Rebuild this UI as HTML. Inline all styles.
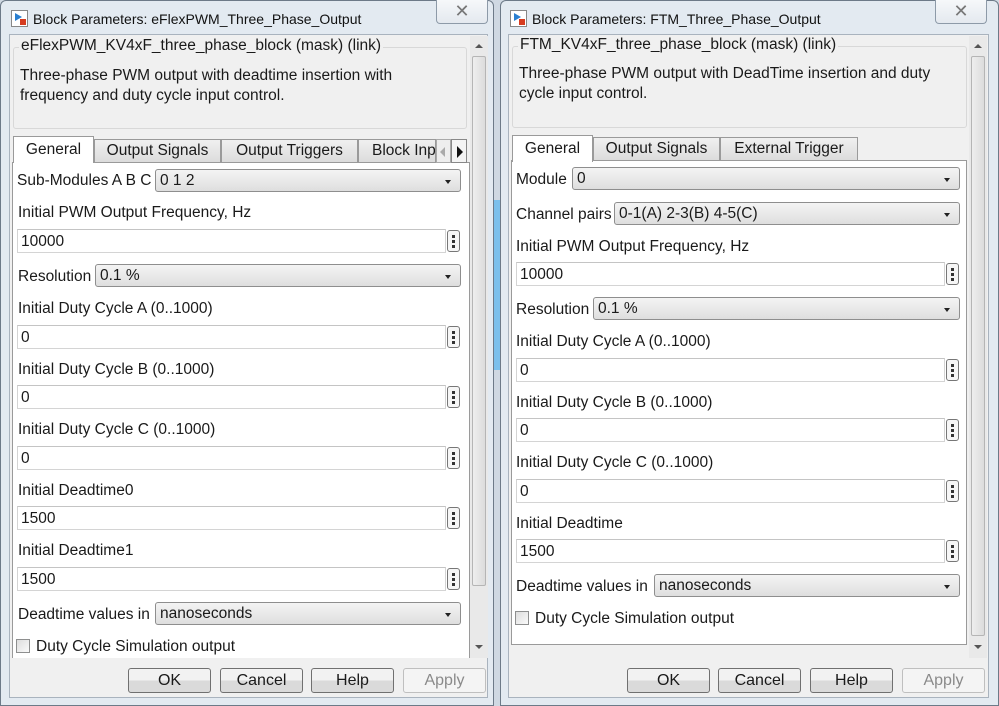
<!DOCTYPE html>
<html><head><meta charset="utf-8">
<style>
*{box-sizing:border-box;margin:0;padding:0}
body{width:999px;height:706px;overflow:hidden;background:#cfd8e2;font-family:"Liberation Sans",Tahoma,sans-serif;font-size:15.5px;color:#1a1a1a;position:relative}
.a{position:absolute;white-space:nowrap}
.lb{margin-top:1px}
.win{position:absolute;top:0;height:706px;background:#e3eaf1;border:1px solid #6d7a88;border-radius:6px 6px 0 0}
.body{position:absolute;background:#f0f0f0;border:1px solid #a9b3be}
.title{font-size:14px;color:#111}
.close{position:absolute;top:0;width:52px;height:24px;border:1px solid #8d9aa8;border-top:none;border-radius:0 0 4px 4px;background:linear-gradient(#f6f8fa,#e4e9ef);text-align:center;font-size:18px;color:#777;line-height:22px}
.icon{position:absolute;width:17px;height:17px;border:1px solid #888;background:#fff}
.icon:before{content:"";position:absolute;left:3px;top:2px;border-left:7px solid #2a7fd0;border-top:4px solid transparent;border-bottom:4px solid transparent}
.icon:after{content:"";position:absolute;left:8px;top:8px;width:6px;height:6px;background:#d63b1f}
.grp{position:absolute;border:1px solid #d8d8d8;border-radius:3px}
.tab{position:absolute;height:24px;border:1px solid #9a9a9a;background:linear-gradient(#f0f0f0,#dcdcdc);text-align:center;line-height:22px;white-space:nowrap}
.tab.sel{background:#fff;border-bottom:none;height:27px}
.panel{position:absolute;background:#fff;border:1px solid #9a9a9a}
.edit{position:absolute;height:24px;border:1px solid #d4d4d4;border-top-color:#c4c4c4;background:#fff;padding-left:3px;line-height:23px}
.dots{position:absolute;width:13px;height:22px;border:1px solid #777;border-radius:3px;background:#f6f6f6}
.dots:before{content:"";position:absolute;left:4px;top:4px;width:3px;height:3px;background:#333;box-shadow:0 5px 0 #333,0 10px 0 #333}
.combo{position:absolute;height:23px;border:1px solid #8e8e8e;border-radius:3px;background:linear-gradient(#f4f4f4,#dedede);padding-left:4px;line-height:22px}
.combo:after{content:"";position:absolute;right:9px;top:10px;border-top:4px solid #222;border-left:3.5px solid transparent;border-right:3.5px solid transparent}
.cb{position:absolute;width:14px;height:14px;border:1px solid #8e8f8f;background:linear-gradient(135deg,#ddd,#fafafa)}
.btn{position:absolute;height:25px;width:83px;border:1px solid #707070;border-radius:3px;background:linear-gradient(#f2f2f2 50%,#dadada 50%);text-align:center;line-height:24px;font-size:16px}
.btn.dis{border-color:#bfbfbf;color:#8a8a8a;background:#f4f4f4}
.sb{position:absolute;width:18px;background:#e9e9e9}
.thumb{position:absolute;left:2px;width:14px;border:1px solid #b5b5b5;border-radius:2px;background:linear-gradient(90deg,#eee,#dcdcdc)}
.up,.dn{position:absolute;left:5px;border-left:4px solid transparent;border-right:4px solid transparent}
.up{border-bottom:4px solid #555}
.dn{border-top:4px solid #555}
</style></head><body>
<div class="a" style="left:492px;top:200px;width:10px;height:170px;background:#7cc0ec"></div>

<!-- LEFT WINDOW -->
<div class="win" style="left:0;width:494px"></div>
<div class="icon" style="left:11px;top:10px"></div>
<div class="a title" style="left:33px;top:11px">Block Parameters: eFlexPWM_Three_Phase_Output</div>
<div class="close" style="left:436px">✕</div>
<div class="body" style="left:9px;top:34px;width:479px;height:664px"></div>
<div class="grp" style="left:13px;top:47px;width:454px;height:82px"></div>
<div class="a" style="left:19px;top:37px;background:#f0f0f0;padding:0 2px;font-size:15.5px">eFlexPWM_KV4xF_three_phase_block (mask) (link)</div>
<div class="a" style="left:20px;top:66px;line-height:20px">Three-phase PWM output with deadtime insertion with<br>frequency and duty cycle input control.</div>
<div class="panel" style="left:12px;top:162px;width:458px;height:496px;border-bottom:none"></div>
<div class="tab" style="left:94px;top:139px;width:127px">Output Signals</div>
<div class="tab" style="left:221px;top:139px;width:137px">Output Triggers</div>
<div class="tab" style="left:358px;top:139px;width:78px;text-align:left;padding-left:13px;overflow:hidden">Block Inp</div>
<div class="a" style="left:436px;top:139px;width:15px;height:24px;background:#eee;border:1px solid #aaa"><div style="position:absolute;left:3px;top:7px;border-right:5px solid #aaa;border-top:5px solid transparent;border-bottom:5px solid transparent"></div></div>
<div class="a" style="left:451px;top:139px;width:16px;height:24px;background:#f4f4f4;border:1px solid #888"><div style="position:absolute;left:5px;top:6px;border-left:6px solid #111;border-top:6px solid transparent;border-bottom:6px solid transparent"></div></div>
<div class="tab sel" style="left:13px;top:136px;width:81px;line-height:26px">General</div>
<div class="a lb" style="left:17px;top:171px">Sub-Modules A B C</div>
<div class="combo" style="left:155px;top:169px;width:306px">0 1 2</div>
<div class="a lb" style="left:18px;top:203px">Initial PWM Output Frequency, Hz</div>
<div class="edit" style="left:17px;top:229px;width:429px">10000</div><div class="dots" style="left:447px;top:230px"></div>
<div class="a lb" style="left:18px;top:267px">Resolution</div>
<div class="combo" style="left:95px;top:264px;width:366px">0.1 %</div>
<div class="a lb" style="left:18px;top:299px">Initial Duty Cycle A (0..1000)</div>
<div class="edit" style="left:17px;top:325px;width:429px">0</div><div class="dots" style="left:447px;top:326px"></div>
<div class="a lb" style="left:18px;top:360px">Initial Duty Cycle B (0..1000)</div>
<div class="edit" style="left:17px;top:385px;width:429px">0</div><div class="dots" style="left:447px;top:386px"></div>
<div class="a lb" style="left:18px;top:420px">Initial Duty Cycle C (0..1000)</div>
<div class="edit" style="left:17px;top:446px;width:429px">0</div><div class="dots" style="left:447px;top:447px"></div>
<div class="a lb" style="left:18px;top:481px">Initial Deadtime0</div>
<div class="edit" style="left:17px;top:506px;width:429px">1500</div><div class="dots" style="left:447px;top:507px"></div>
<div class="a lb" style="left:18px;top:541px">Initial Deadtime1</div>
<div class="edit" style="left:17px;top:567px;width:429px">1500</div><div class="dots" style="left:447px;top:568px"></div>
<div class="a lb" style="left:18px;top:605px">Deadtime values in</div>
<div class="combo" style="left:155px;top:602px;width:306px">nanoseconds</div>
<div class="cb" style="left:16px;top:639px"></div>
<div class="a lb" style="left:36px;top:637px">Duty Cycle Simulation output</div>
<div class="sb" style="left:470px;top:36px;height:622px"><div class="up" style="top:8px"></div><div class="thumb" style="top:20px;height:530px"></div><div class="dn" style="top:609px"></div></div>
<div class="btn" style="left:128px;top:668px">OK</div>
<div class="btn" style="left:220px;top:668px">Cancel</div>
<div class="btn" style="left:311px;top:668px">Help</div>
<div class="btn dis" style="left:403px;top:668px">Apply</div>

<!-- RIGHT WINDOW -->
<div class="win" style="left:500px;width:499px"></div>
<div class="icon" style="left:510px;top:10px"></div>
<div class="a title" style="left:532px;top:11px">Block Parameters: FTM_Three_Phase_Output</div>
<div class="close" style="left:935px">✕</div>
<div class="body" style="left:508px;top:34px;width:481px;height:664px"></div>
<div class="grp" style="left:512px;top:46px;width:455px;height:82px"></div>
<div class="a" style="left:518px;top:36px;background:#f0f0f0;padding:0 2px">FTM_KV4xF_three_phase_block (mask) (link)</div>
<div class="a" style="left:519px;top:64px;line-height:20px">Three-phase PWM output with DeadTime insertion and duty<br>cycle input control.</div>
<div class="panel" style="left:511px;top:160px;width:456px;height:485px"></div>
<div class="tab" style="left:593px;top:137px;width:127px">Output Signals</div>
<div class="tab" style="left:720px;top:137px;width:138px">External Trigger</div>
<div class="tab sel" style="left:512px;top:135px;width:81px;line-height:26px">General</div>
<div class="a lb" style="left:516px;top:170px">Module</div>
<div class="combo" style="left:572px;top:167px;width:388px">0</div>
<div class="a lb" style="left:516px;top:205px">Channel pairs</div>
<div class="combo" style="left:614px;top:202px;width:346px">0-1(A) 2-3(B) 4-5(C)</div>
<div class="a lb" style="left:516px;top:237px">Initial PWM Output Frequency, Hz</div>
<div class="edit" style="left:516px;top:262px;width:429px">10000</div><div class="dots" style="left:946px;top:263px"></div>
<div class="a lb" style="left:516px;top:300px">Resolution</div>
<div class="combo" style="left:593px;top:297px;width:367px">0.1 %</div>
<div class="a lb" style="left:516px;top:332px">Initial Duty Cycle A (0..1000)</div>
<div class="edit" style="left:516px;top:358px;width:429px">0</div><div class="dots" style="left:946px;top:359px"></div>
<div class="a lb" style="left:516px;top:393px">Initial Duty Cycle B (0..1000)</div>
<div class="edit" style="left:516px;top:418px;width:429px">0</div><div class="dots" style="left:946px;top:419px"></div>
<div class="a lb" style="left:516px;top:453px">Initial Duty Cycle C (0..1000)</div>
<div class="edit" style="left:516px;top:479px;width:429px">0</div><div class="dots" style="left:946px;top:480px"></div>
<div class="a lb" style="left:516px;top:514px">Initial Deadtime</div>
<div class="edit" style="left:516px;top:539px;width:429px">1500</div><div class="dots" style="left:946px;top:540px"></div>
<div class="a lb" style="left:516px;top:577px">Deadtime values in</div>
<div class="combo" style="left:654px;top:574px;width:306px">nanoseconds</div>
<div class="cb" style="left:515px;top:611px"></div>
<div class="a lb" style="left:535px;top:609px">Duty Cycle Simulation output</div>
<div class="sb" style="left:969px;top:36px;height:622px"><div class="up" style="top:8px"></div><div class="thumb" style="top:20px;height:580px"></div><div class="dn" style="top:609px"></div></div>
<div class="btn" style="left:627px;top:668px">OK</div>
<div class="btn" style="left:718px;top:668px">Cancel</div>
<div class="btn" style="left:810px;top:668px">Help</div>
<div class="btn dis" style="left:902px;top:668px">Apply</div>
</body></html>
